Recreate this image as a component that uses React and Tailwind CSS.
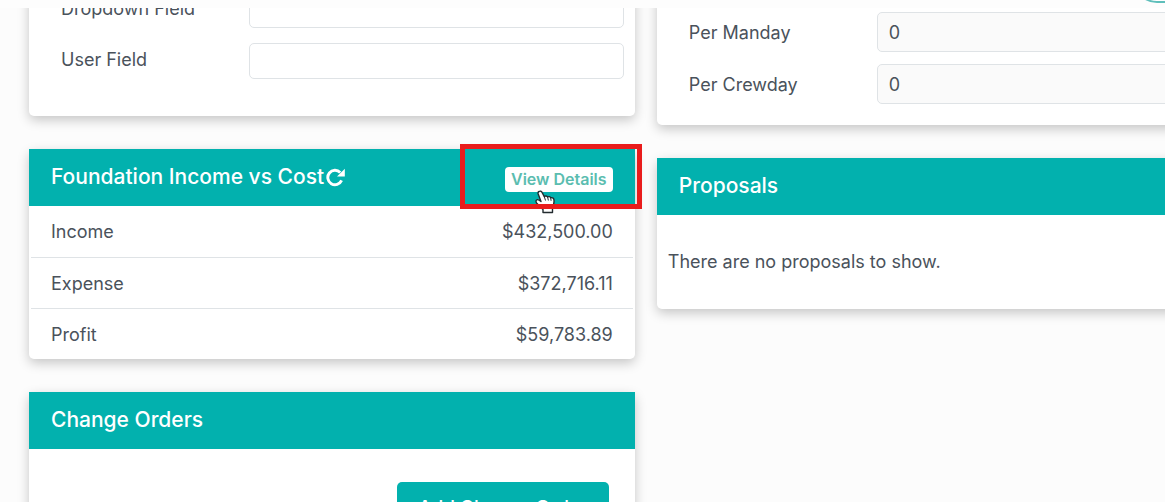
const totals = [
  { label: "Income", amount: "$432,500.00" },
  { label: "Expense", amount: "$372,716.11" },
  { label: "Profit", amount: "$59,783.89" },
];

function Card({ children, className = "" }) {
  return (
    <section
      className={`rounded-[5px] bg-white shadow-[0_4px_12px_rgba(0,0,0,0.22)] ${className}`}
    >
      {children}
    </section>
  );
}

function CardHeader({ title, icon, children }) {
  return (
    <div className="relative flex h-[57px] items-center justify-between bg-[#02b1ae] px-[22px] pb-px">
      <h2 className="flex items-center gap-0.5 text-[21px] leading-7 font-medium text-white">
        {title}
        {icon}
      </h2>
      {children}
    </div>
  );
}

function Field({ id, label, value = "", labelClass = "", inputClass }) {
  return (
    <div className="flex items-center">
      <label htmlFor={id} className={`w-[188px] shrink-0 ${labelClass}`}>
        {label}
      </label>
      <input
        id={id}
        type="text"
        defaultValue={value}
        className={`min-w-0 flex-1 rounded-[5px] border border-[#dfe3e6] px-[11px] ${inputClass}`}
      />
    </div>
  );
}

function RefreshIcon() {
  return (
    <svg viewBox="0 0 19 19" className="size-[19px]" aria-hidden="true">
      <path
        d="M14.200 4.500A7.200 7.200 0 1 0 15.600 12.400"
        fill="none"
        stroke="#fff"
        strokeWidth="2.900"
      />
      <path d="M18.800.8V8.600H11Z" fill="#fff" />
    </svg>
  );
}

function HandCursor() {
  return (
    <svg
      viewBox="0 0 20 24"
      className="absolute top-[41px] right-20 h-6 w-5"
      aria-hidden="true"
    >
      <path
        d="M4 1.500C5.200.7 6.600 1.200 7.200 2.600L9.300 6.600C10.200 5.600 12 5.800 12.600 7C13.600 6.300 15.200 6.600 15.700 7.800C17 7.200 18.600 8 18.900 9.500C19.300 12 19 14.500 17.500 17.500V22.500H8V19.500L2 13.500C.8 12.300.6 10.400 1.800 9.800C2.900 9.200 4 9.800 6 11.500L3.200 4C2.900 3 3 2 4 1.500Z"
        fill="#fff"
        stroke="#222b2f"
        strokeWidth="1.400"
        strokeLinejoin="round"
      />
      <path
        d="M9.300 6.600L10.500 10.500M12.600 7L13.400 10.500M15.700 7.800L16.100 10.800M9.800 14V18.500M12.300 14V18.500M14.800 14V18.500"
        fill="none"
        stroke="#222b2f"
        strokeWidth="1"
      />
    </svg>
  );
}

export default function App() {
  return (
    <div className="relative h-screen overflow-hidden bg-[#fcfcfc] font-[Inter,sans-serif] text-[18px] leading-6 text-[#4a525b]">
      <header className="absolute inset-x-0 top-0 z-10 flex h-2 items-end justify-end overflow-hidden bg-[#fdfdfd] pb-[5px]">
        <button
          type="button"
          aria-label="Menu"
          className="-mr-20 h-12 w-28 shrink-0 rounded-full border-2 border-[#5fbfbb] bg-white"
        />
      </header>

      <main className="-mt-2 flex items-start gap-[22px] pl-[29px]">
        <div className="flex w-[52vw] shrink-0 flex-col gap-[33px]">
          <Card className="flex flex-col gap-[15px] pr-[11px] pb-[37px] pl-8">
            <Field
              id="dropdown-field"
              label="Dropdown Field"
              labelClass="pb-0.5"
              inputClass="h-9"
            />
            <Field
              id="user-field"
              label="User Field"
              labelClass="pb-0.5"
              inputClass="h-9"
            />
          </Card>

          <Card>
            <CardHeader
              title="Foundation Income vs Cost"
              icon={<RefreshIcon />}
            >
              <button
                type="button"
                className="mt-1 h-[25px] w-[108px] rounded-sm bg-white text-[16px] leading-6 font-semibold text-[#5bbdb0]"
              >
                View Details
              </button>
              <HandCursor />
              <div className="pointer-events-none absolute -top-[5px] -right-[7px] -bottom-[3px] w-[182px] border-5 border-[#e91c1c]" />
            </CardHeader>
            <div className="px-0.5">
              <table className="w-full">
                <tbody>
                  {totals.map((row) => (
                    <tr
                      key={row.label}
                      className="h-[51px] border-b border-[#dfe3e6] last:border-b-0"
                    >
                      <th
                        scope="row"
                        className="pt-0.5 pl-5 text-left font-normal"
                      >
                        {row.label}
                      </th>
                      <td className="pt-0.5 pr-5 text-right">{row.amount}</td>
                    </tr>
                  ))}
                </tbody>
              </table>
            </div>
          </Card>

          <Card>
            <CardHeader title="Change Orders" />
            <div className="flex justify-end px-[26px] py-[33px]">
              <button
                type="button"
                className="h-13 w-[212px] rounded-[5px] bg-[#02b1ae] text-[19px] leading-6 font-medium text-white"
              >
                Add Change Order
              </button>
            </div>
          </Card>
        </div>

        <div className="flex w-[52vw] shrink-0 flex-col gap-[33px]">
          <Card className="flex flex-col gap-3 pt-5 pr-[11px] pb-[21px] pl-8">
            <Field
              id="per-manday"
              label="Per Manday"
              value="0"
              labelClass="pt-0.5"
              inputClass="h-10 bg-[#fafafa]"
            />
            <Field
              id="per-crewday"
              label="Per Crewday"
              value="0"
              labelClass="pt-0.5"
              inputClass="h-10 bg-[#fafafa]"
            />
          </Card>

          <Card>
            <CardHeader title="Proposals" />
            <p className="px-[11px] py-[35px]">There are no proposals to show.</p>
          </Card>
        </div>
      </main>
    </div>
  );
}
